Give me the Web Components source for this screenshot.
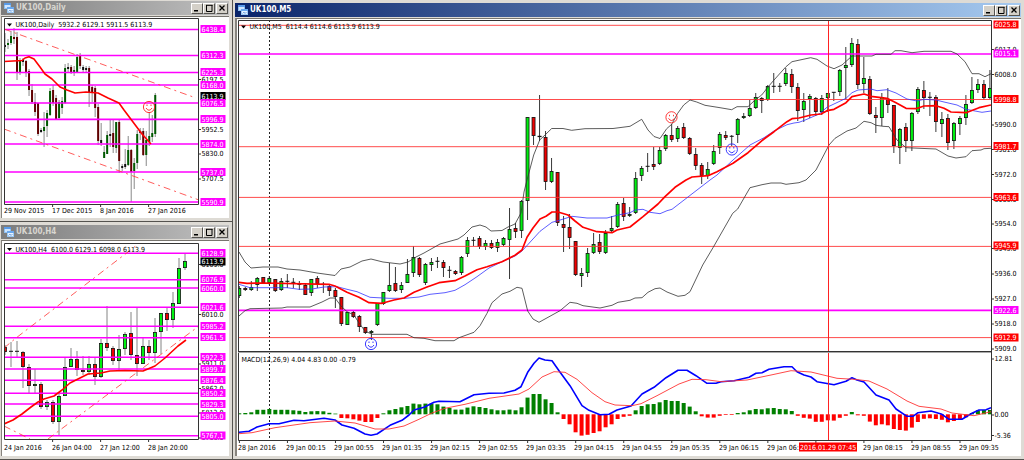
<!DOCTYPE html>
<html lang="en">
<head>
<meta charset="utf-8">
<title>UK100 charts</title>
<style>
  body { margin: 0; background: #d4d0c8; font-family: "DejaVu Sans Condensed", "DejaVu Sans", sans-serif; }
</style>
</head>
<body>
<trade-desk>
  <chart-window slot="side" caption="UK100,Daily" class="top"><price-chart source="daily"></price-chart></chart-window>
  <chart-window slot="side" caption="UK100,H4"><price-chart source="h4"></price-chart></chart-window>
  <chart-window slot="main" caption="UK100,M5" active><price-chart source="m5"></price-chart></chart-window>
</trade-desk>

<template id="desk-template">
  <style>
    :host { display: grid; grid-template-columns: minmax(0, 233fr) minmax(0, 791fr); align-items: start; }
    .side { display: flex; flex-direction: column; }
    .main { display: flex; flex-direction: column; }
    ::slotted(.top) { --frame-top: 1px; }
    ::slotted([slot="side"]) { --frame-left: 1px; --edge: 1px; --inset: 1px; border-right: 1px solid #55534f; }
  </style>
  <div class="side"><slot name="side"></slot></div>
  <main class="main"><slot name="main"></slot></main>
</template>

<template id="window-template">
  <style>
    :host { display: block; background: #dedbd5; border-bottom: 1px solid #55534f;
      padding: var(--frame-top, 3px) 3px 3px var(--frame-left, 2px); }
    :host([slot="side"]) { padding-right: 3px; }
    header { display: flex; align-items: center; height: 14px; box-sizing: border-box; padding: 0 1px 0 3px;
      margin-bottom: 1px; background: linear-gradient(90deg, #7c7c7c, #c0c0c0); color: #d8d6d0; }
    :host([active]) header { background: linear-gradient(90deg, #0a246a, #a6caf0); color: #fff; }
    svg.logo { width: 10px; height: 10px; margin-right: 2px; }
    h2 { flex: 1; margin: 0; font-size: 8px; line-height: 12px; font-weight: bold; white-space: nowrap; }
    button { width: 12px; height: 11px; padding: 0; border: 1px solid; border-color: #fff #55534f #55534f #fff;
      background: #d4d0c8; display: grid; place-items: center; }
    button svg { width: 8px; height: 8px; display: block; }
    button:last-of-type { margin-left: 1px; }
    .client { border-top: 1px solid #77746e; border-left: var(--inset, 2px) solid #87847e; background: #fff; }
  </style>
  <header>
    <svg class="logo" viewBox="0 0 10 10" aria-hidden="true">
      <rect x="0.5" y="0.5" width="6" height="5" fill="#cfe6ff" stroke="#8fc0f0"/>
      <rect x="0" y="0" width="7" height="2" fill="#5a9be8"/>
      <rect x="3.5" y="4.500" width="6" height="5" fill="#e8f4ff" stroke="#9cc8f4"/>
      <rect x="3" y="4" width="7" height="2" fill="#6aa8ee"/>
      <path d="M4.500 8.500 L6 7 L7 8.500 L8.500 7" fill="none" stroke="#4a86d8" stroke-width=".7"/>
    </svg>
    <h2></h2>
    <button type="button" aria-label="Minimize"><svg viewBox="0 0 8 8"><rect x="1" y="6" width="4" height="1.500"/></svg></button>
    <button type="button" aria-label="Maximize"><svg viewBox="0 0 8 8"><path d="M1 1.300H7.500M1.500 1V7.500H7V1" fill="none" stroke="#000"/></svg></button>
    <button type="button" aria-label="Close"><svg viewBox="0 0 8 8"><path d="M1.500 1.500L6.500 6.500M6.500 1.500L1.500 6.500" stroke="#000" stroke-width="1.300"/></svg></button>
  </header>
  <div class="client"><slot></slot></div>
</template>

<template id="chart-template">
  <style>
    :host { display: block; }
    svg { display: block; width: 100%; height: auto; }
    text { font-size: 7px; fill: #000; white-space: pre; }
    text.on { fill: #fff; }
    polyline { fill: none; stroke-linejoin: round; }
  </style>
  <svg role="img"></svg>
</template>

<script>
// Candle rows: open/close span "top bottom", then wick "top bottom", prefixed by g (up), r (down) or d (flat).
const CHARTS = {
  daily: {
    view: [2, 17, 227, 201], box: [4, 18, 198, 204], start: 5, step: 3.005, thin: true,
    header: ["UK100,Daily  5932.2 6129.1 5911.5 6113.9", 15.5, 27], arrow: [9.500, 25],
    candles: "d45 47 33 52,g43 45 39 49,g36 43 31 45,r37 39 28 44,r37 72 32 80,g61 73 58 75,d60 62 58 66,r61 72 60 77,r71 90 69 96,r90 102 84 104,r102 112 93 116,r103 134 103 136,d130 132 128 133,g127 131 112 147,g113 126 110 137,g91 115 88 116,r90 103 85 106,r98 119 95 120,g102 118 100 120,g101 108 97 114,g68 103 64 104,d67 69 63 73,r67 72 65 74,g70 72 66 76,g57 72 54 73,r56 66 53 69,d67 70 65 72,d68 70 66 72,r68 92 66 107,r87 92 85 102,r88 108 86 117,r107 141 104 145,d140 143 123 146,g152 158 146 158,g135 154 131 154,d134 136 120 147,r133 147 119 153,g122 148 122 153,r122 161 120 173,d166 168 164 171,d164 167 149 169,g150 165 136 166,r150 172 149 202,g163 171 158 189,g134 163 130 169,d131 133 128 140,r131 155 128 156,g140 155 131 166,g136 142 112 146,g133 137 115 142,g95 134 93 137",
    lines: [["#f00", 1.6, "4,61.5 22,60.5 25,58 29,56.7 34,59 40,67 45,74 52,79 60,87 67,90 75,93 86,92 98,93 108,98 119,103 124,110 133,122 142,134 151,144"]],
    trends: ["4,29 196,98", "4,129 199,200"],
    levels: [["m", [29.5, 55.5, 72.5, 85, 103, 119.4, 144, 172, 202]]],
    faces: [[149, 107, "#f22"]],
    axisX: 200,
    scale: [["6197.5", 79], ["5952.5", 129], ["5830.0", 153.5], ["5707.5", 178.5]],
    tags: [["6113.9", 96, "#000"], ["6438.4", 29], ["6312.3", 55], ["6225.3", 72], ["6168.0", 85], ["6076.5", 103], ["5996.9", 119], ["5874.0", 144], ["5737.0", 172], ["5590.9", 202]],
    dates: [["29 Nov 2015", 4], ["17 Dec 2015", 52], ["8 Jan 2016", 100], ["27 Jan 2016", 148]], dateY: 212.5, tagW: 26,
    ticks: [52.6, 100.6, 148.6]
  },
  h4: {
    view: [2, 241, 227, 215], box: [4, 243, 198, 439], start: 5, step: 6, tagW: 26,
    header: ["UK100,H4  6100.0 6129.1 6098.0 6113.9", 15.5, 251.5], arrow: [9.500, 249.5], wick: "#777",
    candles: "r347 352 345 355,d351 352 342 367,d351 352 341 357,r352 367 351 388,r367 386 364 393,g384 386 369 393,r384 407 382 409,g402 407 400 410,r402 422 400 424,g396 422 392 435,g367 396 358 396,g359 367 348 367,r359 370 351 376,r370 372 356 375,g364 372 356 375,r364 377 357 385,g343 377 339 378,r343 348 306 351,r348 361 346 365,g349 361 335 371,g334 349 332 355,r333 355 312 360,r355 364 308 376,g346 364 337 364,r346 353 340 360,g332 353 318 363,g313 332 313 354,r313 320 307 331,g303 320 292 328,g268 304 258 304,g261 268 254 270",
    lines: [["#f00", 1.6, "4,424 13,420 22,414 31,407 38,402 44,399 54,396 62,390 70,383 80,378 88,374 101,373 110,371 125,370.5 143,371 155,366 165,358 178,346 186,340"]],
    trends: ["4,348 16,338 137,245", "48,439 199,326", "4,426 30,439"],
    levels: [["m", [253.3, 279.7, 288, 307.3, 326.3, 337.7, 357.3, 369, 380.3, 393.3, 404, 416.3, 435.7]]],
    faces: [], axisX: 200,
    scale: [["6109.0", 264], ["6010.0", 314], ["5911.0", 363.5], ["5862.0", 388], ["5813.0", 412.5], ["5763.0", 437.5]],
    tags: [["6128.9", 253], ["6113.9", 261.5, "#000"], ["6076.9", 279], ["6060.0", 288], ["6021.6", 307], ["5985.2", 326], ["5961.5", 337], ["5922.3", 357], ["5899.7", 369], ["5876.4", 380], ["5850.2", 393], ["5829.3", 404], ["5805.0", 416], ["5767.1", 435.5]],
    dates: [["24 Jan 2016", 4], ["26 Jan 04:00", 52], ["27 Jan 12:00", 100], ["28 Jan 20:00", 148]], dateY: 449.5,
    ticks: [52.6, 100.6, 148.6]
  },
  m5: {
    view: [237, 19, 784, 437], box: [238, 20, 991, 351], start: 239.3, step: 6.005, tagW: 26,
    header: ["UK100,M5  6114.4 6114.6 6113.9 6113.9", 249.5, 29], arrow: [243.5, 27],
    candles: "g288 296 286 298,r288 290 287 291,g287 290 281 291,g278 285 277 291,r277 283 277 283,g278 283 276 285,r279 291 279 292,g281 290 278 291,d281 282 274 288,d282 283 278 288,d284 285 281 290,r285 295 283 295,g279 293 279 296,r278 284 276 288,d284 285 282 293,r286 291 284 296,r290 297 288 308,r297 324 297 326,g312 325 312 325,r312 317 311 318,r316 327 315 332,r327 333 327 334,g331 333 330 340,g303 325 303 326,g292 304 292 305,g285 291 263 292,r283 291 267 292,g285 290 282 293,g274 283 259 283,g257 273 246 277,r258 275 257 277,g264 283 263 285,g262 265 258 271,d261 262 257 268,r262 268 260 277,d270 271 266 278,r271 274 270 275,g257 273 256 275,g240 254 237 257,d240 241 237 246,r238 247 236 249,g243 247 240 250,r243 248 240 249,g242 248 239 252,g238 245 237 246,g229 240 208 279,r228 232 223 238,g201 231 200 238,g117 201 117 220,r117 136 117 145,d136 138 95 141,r137 182 131 190,g171 182 158 183,r172 223 172 226,r224 228 216 252,r227 238 214 249,r241 275 241 276,g273 276 268 287,g253 273 248 277,g244 253 233 254,r242 252 234 254,g233 253 230 254,g228 231 216 232,g204 227 202 228,r203 217 198 221,g214 216 207 217,g178 213 172 214,g168 176 166 181,d166 167 153 172,r164 167 147 170,g150 164 147 165,g135 149 134 151,r135 140 124 142,g128 139 126 142,r127 138 123 139,r138 154 137 155,r154 166 148 170,r165 176 163 184,g169 176 162 179,g151 164 145 165,g134 148 132 154,r135 138 131 140,d136 137 135 146,g119 135 118 143,g116 118 113 119,g108 116 100 117,g97 108 93 109,r98 101 97 113,g86 100 85 101,d86 87 73 93,d86 87 83 92,g73 84 68 86,r74 87 69 93,r87 111 83 121,g101 110 93 122,g96 99 94 118,r98 112 97 116,g98 112 95 115,g93 98 93 112,d92 93 92 101,g70 92 69 96,g65 68 47 99,g43 65 38 67,r44 85 39 89,g78 84 57 93,r79 114 76 115,r115 118 107 133,g97 118 93 126,r99 105 88 113,r105 146 105 153,g129 148 128 164,r127 141 123 152,g113 141 112 151,g89 112 87 114,r90 98 81 109,d97 98 92 116,r97 122 95 132,g119 124 112 137,r118 143 114 150,g123 141 122 149,g118 124 116 135,g104 118 95 125,g90 103 77 104,g84 90 79 93,r84 98 80 100,g88 98 70 99",
    lines: [
      ["#333", 0.8, "239,252 245,262 251,268 263,267 278,267 287,269 300,270 317,273 335,275.5 341,269 350,267 362,261 371,259 383,262 400,264 408,262 416,257 424,253 440,244 458,239 464,235 472,227 480,225 486,227 491,231 502,230.5 508,227 515,224 521,213 524,192 527,180 533.7,155 539.7,140 545,135 551.7,128.5 563,128.5 571.7,130.3 585,128.7 613,128.5 630,126.3 641.7,119.3 648,130 654,136.5 660,138.5 666.7,128.7 671.7,124.3 677.7,113.3 683.7,105 690,100 696.7,102 705,105.3 720,107.7 731.7,109.7 737,106.7 748,106.7 755,100 761.7,95 768,87 774,80 786,66.7 792,61.7 810.7,57.7 817,59.3 827,66 834,68.7 842,65 852,56 872,56 876,54.3 891,54.3 895,50.7 901,50.7 912,52.7 924,51.3 951,51.3 957,54 965,61.7 972,73.7 979,73.7 985,76.7 991,73.7"],
      ["#333", 0.8, "239,316 245,310.7 250,308.7 282,308 287,307 310,307 322,302 330,298 335,298 341,306 347,311.7 354,315 359,323 365,331 372,334.3 407,334.3 414,337.7 424,338.3 435,340.7 454,340.7 459,337.7 474,332.3 480,325.7 487,313.3 492,302.7 502,294 510,291.3 517,287.3 522,288.3 527.7,311 533,319 539,322.3 560,310.7 570,302.3 577,303.3 583,305.7 600,308 612,305.3 618,302.3 630,300.3 635,298 642,297.7 648,292.3 655,288.7 660,288 667,292 678,296.3 685,295.3 690,291.7 702.7,265 713,247.7 732.7,213.3 737.7,209 750,187.7 762,184.7 771,183 781,183 786,184.3 799,182.7 806,180 816,170 829,145 835,138.3 847,131 856,128 864,121.3 871,122.7 876,125.3 883,126.3 889,126.7 897,140 906,147.7 936,149 948,156 956,158 966,156.7 972,150.7 981,150 984,148.7 991,148.3"],
      ["#33f", 0.8, "239,284.3 250,287.7 287,287.7 299,289.3 312,289 324,287 337,286.7 347,289.3 357,291.7 370,297.3 389,298.3 405,298.3 419,297 430,294.3 445,292.7 455,290.3 465,284.7 477,276.7 489,268 502,261.7 515,256 522,251 540,231.3 552,222.3 558,220.7 572,216.3 587,218 607,218 618,215 630,212.7 635,210 643,209.3 650,212.3 660,213.7 667,210.7 672,209.3 710,180 717,175 733,160 750,145 764,137.7 774,131 787,124.7 794,123 799,122.3 806,119.7 819,114 827,107.3 846,98.3 852,92.7 858,90 871,89 877,90.7 887,89.7 896,93 907,99 917,101 924,99.3 936,100 944,102 957,105 966,109.3 982,112.3 991,111"],
      ["#f00", 1.7, "239,282.3 247,283.3 264,283 329,284.3 335,286 347,292.3 359,297.3 369,302.7 382,303.3 394,300 404,298 414,292.3 427,287 439,282.7 455,280.7 465,276 477,269.7 487,266.7 502,261.7 515,255.3 522,250 527,237.3 533,228 540,219 546,216.3 552,212 558,212 568,215 575,221 583,227.3 597,231.7 612,232.7 617,230 630,227 643,216.7 658,204 665,196.7 675,187.3 686,180 692,177 708,175.7 717,171.7 733,163.3 748,152.7 764,139 774,131.7 787,121.7 792,118.7 799,118 811,115 821,114 827,110.7 834,109.3 846,102.7 852,96.7 864,94 871,96.3 879,97.3 887,98.3 896,102.7 906,108.3 916,108.7 924,106 936,105.7 944,108.3 951,112 966,112.7 979,107.7 991,105"]
    ],
    trends: [],
    levels: [["m", [54, 310.4]], ["r", [25.3, 99.5, 146.7, 197.4, 246.4, 337.6]]],
    faces: [[671.5, 117.3, "#f22"], [731.8, 149.5, "#22f"], [371, 344, "#22f"]],
    axisX: 993,
    scale: [["6017.0", 49], ["6008.0", 74], ["5990.0", 124.5], ["5981.0", 149], ["5972.0", 174], ["5963.0", 199], ["5954.0", 223.5], ["5945.0", 248], ["5936.0", 273.5], ["5927.0", 298.5], ["5918.0", 323.5], ["5909.0", 348.5], ["12.81", 358.5], ["0.00", 414.5], ["-5.36", 435]],
    tags: [["6025.8", 24.5, "#f00"], ["6015.1", 53.5], ["5998.8", 99, "#f00"], ["5981.7", 146, "#f00"], ["5963.6", 197, "#f00"], ["5945.9", 245.5, "#f00"], ["5922.6", 310], ["5912.9", 337.5, "#f00"]],
    dates: [["28 Jan 2016", 238], ["29 Jan 00:15", 286], ["29 Jan 00:55", 334], ["29 Jan 01:35", 382], ["29 Jan 02:15", 430], ["29 Jan 02:55", 478], ["29 Jan 03:35", 526], ["29 Jan 04:15", 574], ["29 Jan 04:55", 622], ["29 Jan 05:35", 670], ["29 Jan 06:15", 719], ["29 Jan 06:55", 767], ["29 Jan 08:15", 863], ["29 Jan 08:55", 911], ["29 Jan 09:35", 959]], dateY: 449.5,
    ticks: Array.from({ length: 16 }, (_, k) => 239.4 + 48.04 * k),
    macd: {
      bottom: 440, zero: 414.3, label: ["MACD(12,26,9) 4.04 4.83 0.00 -0.79", 241.5, 362],
      bars: [1, 1.3, 2, 4.5, 4.5, 5.3, 4.5, 4.5, 4.5, 4, 3.5, 2.3, 3, 3.2, 3, 1.5, .7, -3.7, -4, -5, -6.3, -7.7, -7.7, -3.7, 1, 4, 5.3, 7, 8.3, 10.7, 10, 10.7, 10.7, 10, 7.7, 6.3, 4.7, 4.7, 6.7, 8, 7.3, 6.3, 5, 4, 4, 4.7, 4, 7, 16.7, 20.3, 20.3, 15, 11.3, 2, -4.7, -10, -18, -21.3, -20.5, -18.7, -17, -13, -10, -4.7, -2.5, -1.5, 4, 8.3, 10, 10.3, 12, 14.3, 13.3, 13.3, 11.3, 7.7, 3, -2, -3.3, -3.3, -1.5, -.7, -.7, 1.3, 2, 4, 5.3, 5, 6, 6.3, 5.3, 5, 3.3, -1.5, -3.5, -4.3, -7.5, -7.5, -6, -6.3, -3.5, -1.5, 2.3, -1, -1.5, -7.3, -11, -10, -11, -14.7, -15.7, -16.3, -13.3, -7.7, -4.5, -4, -4.7, -5.5, -8, -6.7, -5.3, -3, 1.3, 4, 4.3, 4.3],
      lines: [
        ["#00f", 1.6, "239,432.3 249,431.3 257,427 269,423.7 279,423.7 294,420.3 304,420.7 324,418.3 335,420 342,425 354,428.3 365,434 371,435.3 377,434 390,425.3 402,420.3 409,415 414,410 424,407.3 434,402.3 439,401.3 460,401.7 474,394.7 489,393.3 504,393 515,390.3 521,386.7 528,371.7 534,363.3 539,358 545,360 552,360.7 559,370.7 570,385.7 582,405.7 589,410.3 600,414.7 609,414.3 617,410 631,406 642,394 654,387.3 666,377.7 678,370.3 687,370.3 696,375.7 707,383.3 716,383.3 721,381.7 734,380.7 749,377.3 756,373.3 762,372.7 769,369.3 784,366.7 792,366.7 797,371.7 804,375 811,377 817,381.7 834,384.7 846,381.3 852,377.7 857,380 864,382 876,395 889,400 896,409 907,416.3 913,416.3 918,412.7 931,411 942,414.3 949,419.3 962,419.3 972,413.3 979,410 986,409.7 991,407.7"],
        ["#f33", 0.9, "239,433.7 252,432.7 275,427.7 310,422.7 335,421 355,423 375,429 389,429 404,426 419,419.3 432,413 445,408.3 465,404.3 489,398.3 519,394 529,389 542,377 554,371.7 565,372.3 577,379.3 592,392.7 605,401.7 615,405 632,405.7 641,403.7 657,395.7 679,384 692,379.3 706,379.7 721,381.7 747,380 771,375 791,370.7 811,372 837,378.3 854,379.3 869,381 887,389 907,401 919,406.3 941,409 952,413 974,415.7 991,411.7"]
      ]
    },
    day: 269.5, cursor: { x: 828.5, text: "2016.01.29 07:45", left: 799, width: 58 }
  }
};

class BaseElement extends HTMLElement {
  constructor() {
    super();
    this.attachShadow({ mode: "open" });
    this.shadowRoot.append(document.getElementById(this.constructor.template).content.cloneNode(true));
  }
}

class TradeDesk extends BaseElement { static template = "desk-template"; }

class ChartWindow extends BaseElement {
  static template = "window-template";
  connectedCallback() { this.shadowRoot.querySelector("h2").textContent = this.getAttribute("caption"); }
}

class PriceChart extends BaseElement {
  static template = "chart-template";
  connectedCallback() {
    const c = CHARTS[this.getAttribute("source")];
    const svg = this.shadowRoot.querySelector("svg");
    svg.setAttribute("viewBox", c.view.join(" "));
    svg.setAttribute("aria-label", c.header[0]);
    svg.innerHTML = this.draw(c);
  }
  line(x1, y1, x2, y2, color, w = 1, extra = "") {
    return `<line x1="${x1}" y1="${y1}" x2="${x2}" y2="${y2}" stroke="${color}" stroke-width="${w}" ${extra}/>`;
  }
  rect(x, y, w, h, fill, extra = "") {
    return `<rect x="${x}" y="${y}" width="${w}" height="${h}" fill="${fill}" ${extra}/>`;
  }
  text([s, x, y], on = "") { return `<text x="${x}" y="${y}" class="${on}">${s}</text>`; }
  poly([color, w, pts]) { return `<polyline points="${pts}" stroke="${color}" stroke-width="${w}"/>`; }
  candle(row, i, c) {
    const [top, low, high, deep] = row.slice(1).split(" ").map(Number);
    const x = c.start + c.step * i, kind = row[0];
    let out = this.line(x, high, x, deep, c.thin ? "#888" : c.wick || "#222", c.thin ? 1 : 0.9);
    if (c.thin) return out + this.rect(x - 1, top, 2, low - top, { g: "#005a00", r: "#600000", d: "#111" }[kind]);
    if (kind === "d") return out + this.rect(x - 2, top - 0.2, 4, Math.min(low - top, 1.3), "#111");
    return out + this.rect(x - 1.5, top + 0.4, 3, Math.max(low - top - 0.8, 1), kind === "g" ? "#00f010" : "#f00000", `stroke="#111" stroke-width=".8"`);
  }
  face([x, y, color]) {
    return `<g fill="none" stroke="${color}" stroke-width=".9"><circle cx="${x}" cy="${y}" r="5.600"/>
      <path d="M${x - 3} ${y + 1}Q${x} ${y + 5.5} ${x + 3} ${y + 1}M${x - 2} ${y - 2.5}v1.500M${x + 2} ${y - 2.5}v1.500"/></g>`;
  }
  draw(c) {
    const [l, t, r, b] = c.box, m = c.macd, floor = m ? m.bottom : b;
    let o = `<clipPath id="plot"><rect x="${l}" y="${t}" width="${r - l}" height="${floor - t}"/></clipPath><g clip-path="url(#plot)">`;
    if (c.day) o += this.line(c.day, t, c.day, floor, "#222", 1, `stroke-dasharray="2 2"`);
    o += c.candles.split(",").map((row, i) => this.candle(row, i, c)).join("");
    for (const [kind, ys] of c.levels) for (const y of ys)
      o += kind === "m" ? this.line(l, y, r, y, "#f0f", 1.6) : this.line(l, y, r, y, "#ff3838", 0.9);
    o += c.lines.map(s => this.poly(s)).join("");
    for (const pts of c.trends) o += `<polyline points="${pts}" stroke="#f33" stroke-width=".8" stroke-dasharray="7 4 2 4"/>`;
    if (m) {
      m.bars.forEach((h, i) => {
        o += this.rect(c.start + c.step * i - 2, h > 0 ? m.zero - h : m.zero, 4, Math.abs(h), h > 0 ? "#008000" : "#f00");
      });
      o += m.lines.map(s => this.poly(s)).join("");
    }
    if (c.cursor) o += this.line(c.cursor.x, t, c.cursor.x, floor, "#f22", 1);
    o += "</g>";
    o += `<path d="M${l + .5} ${floor + .5}V${t + .5}H${r + .5}V${floor + .5}Z" fill="none" stroke="#333"/>`;
    if (m) o += this.line(l, b + .5, r + 1, b + .5, "#333") + this.line(l, b + 1.5, r, b + 1.5, "#aaa") + this.text(m.label);
    o += this.text(c.header);
    const [ax, ay] = c.arrow;
    o += `<path d="M${ax - 2.5} ${ay - 1.5}h5l-2.500 3z"/>`;
    o += c.faces.map(f => this.face(f)).join("");
    for (const [s, y] of c.scale) o += this.line(r + 1, y + .5, r + 3, y + .5, "#333") + this.text([s, c.axisX + 1.5, y + 2.5]);
    for (const [s, y, fill = "#f0f"] of c.tags) o += this.rect(c.axisX + .5, y - 4, c.tagW - 1, 8, fill) + this.text([s, c.axisX + 1.5, y + 2.5], "on");
    for (const x of c.ticks) o += this.line(x, floor, x, floor + 3, "#333");
    for (const [s, x] of c.dates) o += this.text([s, x, c.dateY]);
    if (c.cursor) o += this.rect(c.cursor.left, c.dateY - 7, c.cursor.width, 9, "#f00") + this.text([c.cursor.text, c.cursor.left + 1, c.dateY], "on");
    return o;
  }
}

customElements.define("trade-desk", TradeDesk);
customElements.define("chart-window", ChartWindow);
customElements.define("price-chart", PriceChart);
</script>
</body>
</html>
